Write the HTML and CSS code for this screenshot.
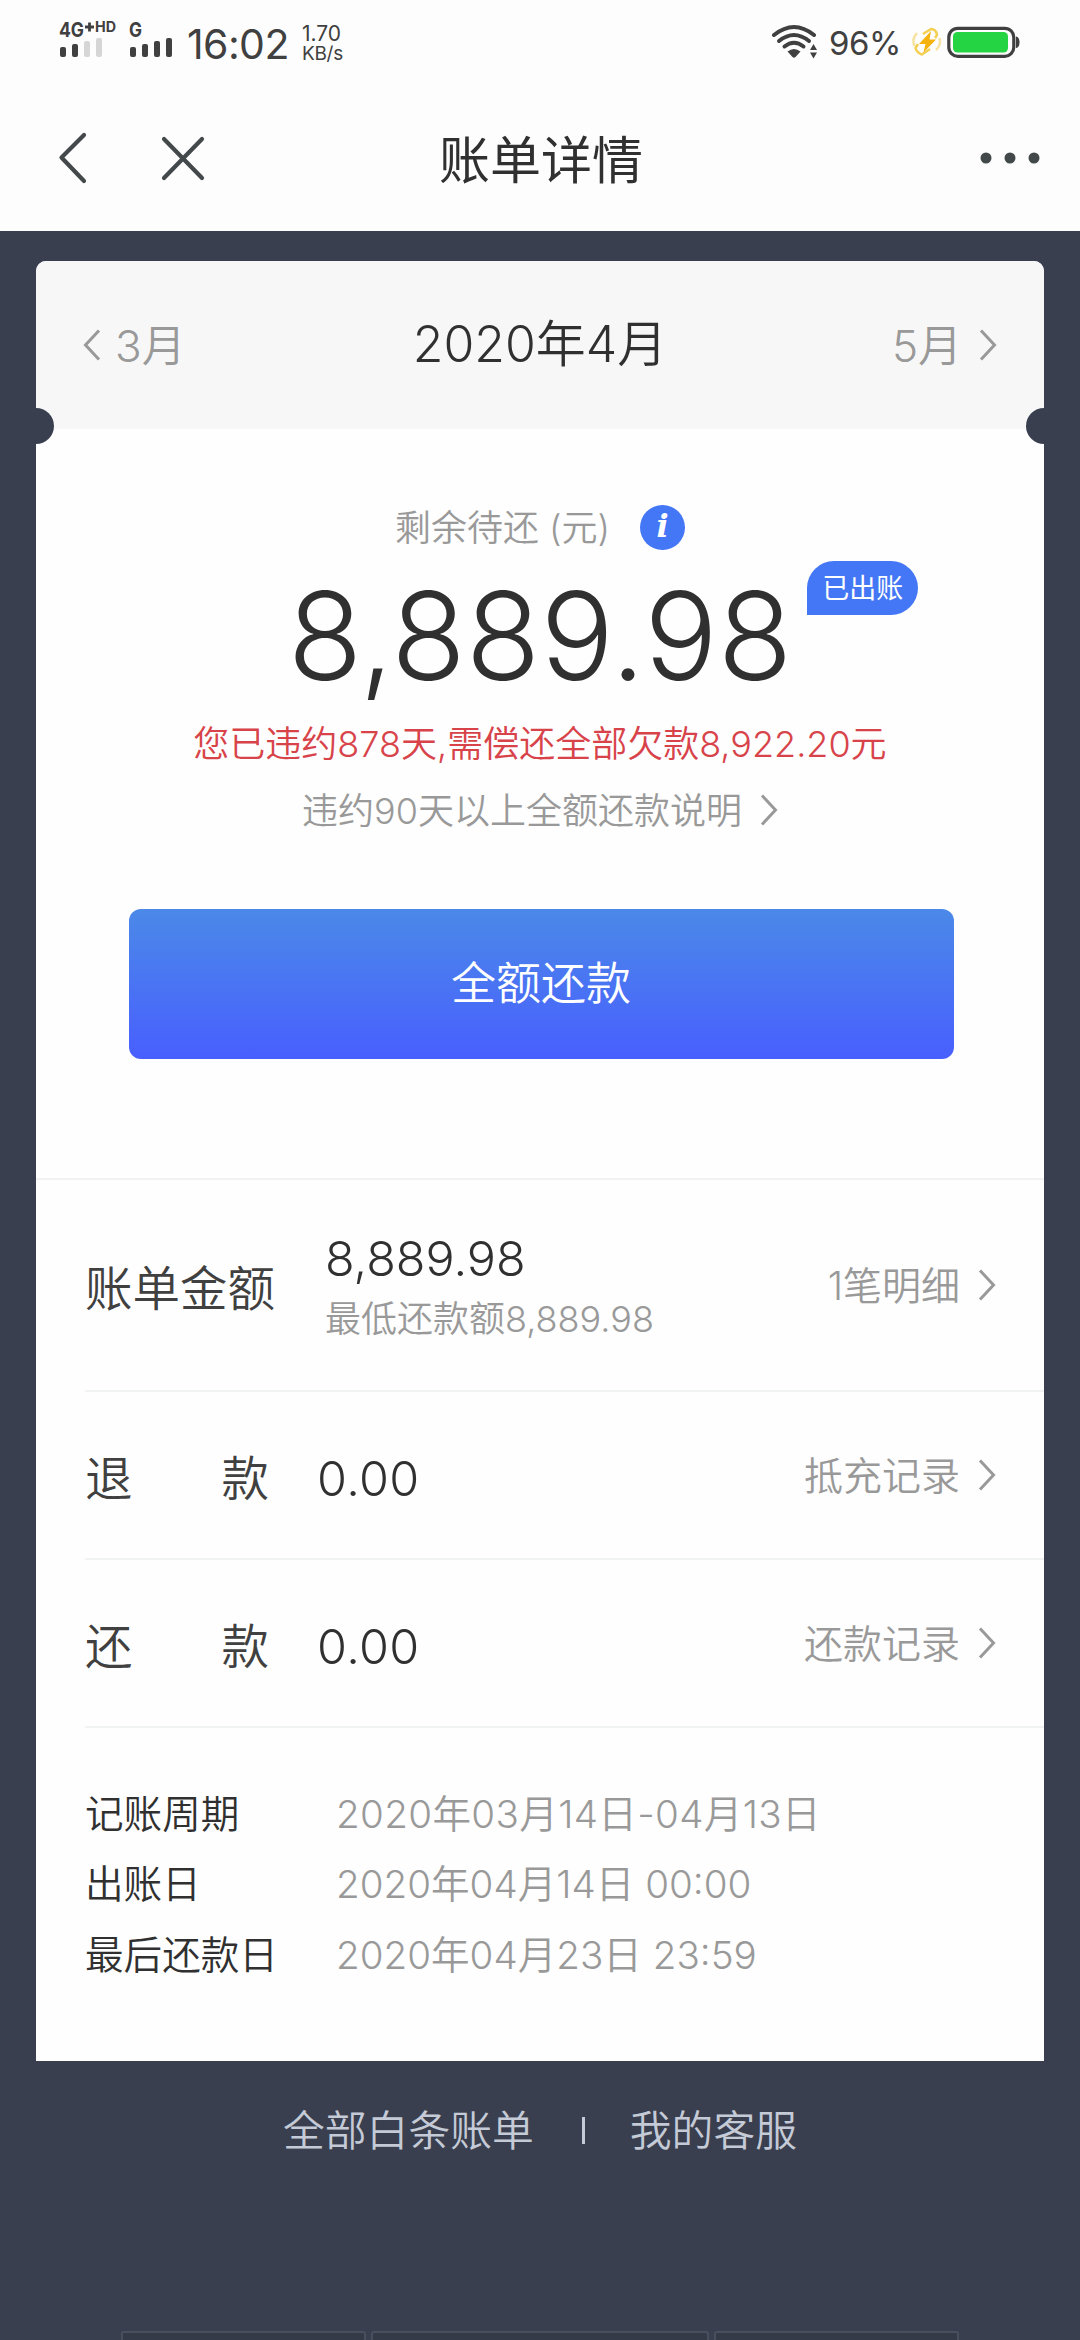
FILE: index.html
```html
<!DOCTYPE html>
<html lang="zh-CN">
<head>
<meta charset="utf-8">
<title>账单详情</title>
<link rel="stylesheet" href="styles.css">
</head>
<body>
<svg class="defs" width="0" height="0">
  <symbol id="chev" viewBox="0 0 18 32"><path d="M2 1.500L15.500 16L2 30.500" fill="none" stroke="currentColor" stroke-width="3"/></symbol>
</svg>
<header class="top">
  <div class="status">
    <svg class="signal" width="136" height="54" viewBox="0 -10 136 54">
      <g class="net"><text x="0" y="17" font-size="20" textLength="25" lengthAdjust="spacingAndGlyphs">4G</text>
      <text x="36" y="12" font-size="14" textLength="21" lengthAdjust="spacingAndGlyphs">HD</text>
      <text x="70" y="17" font-size="20" textLength="13" lengthAdjust="spacingAndGlyphs">G</text></g>
      <path d="M26 7h9M30.500 2.500v9" stroke="#404040" stroke-width="2.800"/>
      <g fill="#404040"><rect x="1" y="27" width="6" height="10" rx="2"/><rect x="13" y="24" width="6" height="13" rx="2"/>
      <rect x="71" y="27" width="6" height="10" rx="2"/><rect x="83" y="24" width="6" height="13" rx="2"/><rect x="95" y="21" width="6" height="16" rx="2"/><rect x="107" y="18" width="6" height="19" rx="2"/></g>
      <g fill="#d6d6d6"><rect x="25" y="21" width="6" height="16" rx="2"/><rect x="37" y="18" width="6" height="19" rx="2"/></g>
    </svg>
    <span class="clock">16:02</span>
    <span class="speed"><span class="rate">1.70</span><span class="unit">KB/s</span></span>
    <span class="grow"></span>
    <svg class="wifi" width="47" height="36" viewBox="0 0 47 36">
      <g fill="none" stroke="#404040" stroke-width="4" stroke-linecap="round"><path d="M3 11Q23 -5 43 11"/><path d="M8 17Q23 5 38 17"/><path d="M13.500 22.500Q23 15 32.500 22.500"/></g>
      <path d="M16.500 27.500Q23 22.500 29.500 27.500L24.500 33Q23 34.500 21.500 33Z" fill="#404040"/>
      <path d="M39 26l3.500-6 3.500 6zM39 28.500h7l-3.500 6z" fill="#404040"/>
    </svg>
    <span class="pct">96%</span>
    <svg class="charge" width="32" height="32" viewBox="0 0 32 32">
      <g fill="none" stroke-width="2.500"><path d="M6 7A12 12 0 0 0 3.500 20M25 24A12 12 0 0 0 28.500 12" stroke="#f7e3a0"/>
      <path d="M12 8L20 3Q25 3 26 9L24 12M19 23L11 28.500Q6 27 4.500 22L7 18" stroke="#f3cf52"/></g>
      <path d="M20 5L8 18H14.500L12.500 26.500L25 13.500H18.500Z" fill="#f5b20c"/>
    </svg>
    <svg class="battery" width="74" height="32" viewBox="0 0 74 32">
      <rect x="1.800" y="2.300" width="65" height="28" rx="9" fill="none" stroke="#404040" stroke-width="3.200"/>
      <rect x="6" y="6" width="55" height="20.500" rx="4.500" fill="#25d442"/>
      <path d="M69 10.500Q72.500 11 72.500 16.300T69 22Z" fill="#404040"/>
    </svg>
  </div>
  <nav class="nav">
    <svg class="back" width="30" height="54" viewBox="0 0 30 54"><path d="M26 4L3.500 26.500L26 50" fill="none" stroke="#43484a" stroke-width="4.200" stroke-linecap="round" stroke-linejoin="round"/></svg>
    <svg class="close" width="46" height="46" viewBox="0 0 46 46"><path d="M4 4L42 43M42 4L4 43" fill="none" stroke="#43484a" stroke-width="4.200" stroke-linecap="round"/></svg>
    <h1 class="title">账单详情</h1>
    <svg class="more" width="62" height="14" viewBox="0 0 62 14" fill="#43484a"><circle cx="7" cy="7" r="5.500"/><circle cx="31" cy="7" r="5.500"/><circle cx="55" cy="7" r="5.500"/></svg>
  </nav>
</header>
<main class="card">
  <section class="months">
    <span class="notch notch-left"></span><span class="notch notch-right"></span>
    <span class="prev"><svg class="chev flip" width="18" height="32"><use href="#chev"/></svg><span class="name">3月</span></span>
    <h2 class="month">2020年4月</h2>
    <span class="next"><span class="name">5月</span><svg class="chev" width="18" height="32"><use href="#chev"/></svg></span>
  </section>
  <section class="summary">
    <div class="due"><span class="name">剩余待还 (元)</span><span class="info">i</span></div>
    <div class="total"><span>8,889.98</span><span class="badge">已出账</span></div>
    <div class="warn">您已违约878天,需偿还全部欠款8,922.20元</div>
    <div class="explain"><span class="name">违约90天以上全额还款说明</span><svg class="chev" width="18" height="32"><use href="#chev"/></svg></div>
    <button class="pay">全额还款</button>
  </section>
  <section class="row row-bill">
    <span class="label">账单金额</span>
    <span class="amounts"><span class="value">8,889.98</span><span class="minimum">最低还款额8,889.98</span></span>
    <span class="link"><span class="name">1笔明细</span><svg class="chev" width="18" height="32"><use href="#chev"/></svg></span>
  </section>
  <section class="row">
    <span class="label spread"><span>退</span><span>款</span></span><span class="value zero">0.00</span>
    <span class="link"><span class="name">抵充记录</span><svg class="chev" width="18" height="32"><use href="#chev"/></svg></span>
  </section>
  <section class="row">
    <span class="label spread"><span>还</span><span>款</span></span><span class="value zero">0.00</span>
    <span class="link"><span class="name">还款记录</span><svg class="chev" width="18" height="32"><use href="#chev"/></svg></span>
  </section>
  <dl class="dates">
    <dt>记账周期</dt><dd class="period">2020年03月14日-04月13日</dd>
    <dt>出账日</dt><dd>2020年04月14日 00:00</dd>
    <dt>最后还款日</dt><dd>2020年04月23日 23:59</dd>
  </dl>
</main>
<footer class="footer">
  <div class="links"><span>全部白条账单</span><i class="bar"></i><span>我的客服</span></div>
  <div class="tabs"><span></span><span></span><span></span></div>
</footer>
</body>
</html>
```
FILE: styles.css
```css
* { box-sizing: border-box; margin: 0; padding: 0; }
body {
  width: 1080px; height: 2340px; overflow: hidden;
  display: flex; flex-direction: column;
  background: #393f4f; color: #303030;
  font-family: Inter, "Noto Sans CJK SC", sans-serif; font-weight: 350;
}
.defs { position: absolute; }
svg { flex: none; display: block; }
.top { height: 231px; flex: none; background: #fdfdfd; }
.status { height: 85px; display: flex; align-items: flex-start; padding: 10px 59px 0 59px; color: #404040; font-weight: 400; }
.net text { font-family: Inter, sans-serif; font-weight: 700; fill: #404040; }
.signal { margin: 0 -8px 0 0; }
.clock { font-size: 41px; line-height: 48px; width: 101px; margin-top: 10px; white-space: nowrap; letter-spacing: -0.6px; }
.speed { display: flex; flex-direction: column; margin-left: 14px; font-size: 21px; padding-top: 13px; }
.rate { line-height: 21px; }
.unit { font-size: 19px; line-height: 19px; letter-spacing: -0.3px; }
.grow { flex: 1; }
.wifi { margin-top: 14px; }
.pct { font-size: 33px; line-height: 46px; margin: 10px 0 0 11px; width: 74px; white-space: nowrap; letter-spacing: -0.5px; }
.charge { margin: 16px 4px 0 8px; }
.battery { margin-top: 16px; }
.nav { height: 146px; display: grid; grid-template-columns: 30px 118px 1fr 62px; align-items: center; padding: 0 39px 0 58px; }
.close { justify-self: end; }
.title { font-size: 51px; font-weight: 400; line-height: 60px; text-align: center; padding: 6px 103px 0 0; }
.card { width: 1008px; height: 1800px; flex: none; margin: 30px 36px 0; background: #fefefe; border-radius: 10px 10px 0 0; }
.months {
  position: relative; height: 168px; padding: 0 47px;
  display: grid; grid-template-columns: 1fr auto 1fr; align-items: center;
  background: #f7f7f7; border-radius: 10px 10px 0 0; color: #999; font-size: 44px;
}
.name { padding-bottom: 4px; }
.notch { position: absolute; top: 147px; width: 18px; height: 36px; background: #393f4f; }
.notch-left { left: 0; border-radius: 0 18px 18px 0; }
.notch-right { right: 0; border-radius: 18px 0 0 18px; }
.prev, .next { display: flex; align-items: center; gap: 17px; }
.prev { gap: 14px; }
.next { justify-content: flex-end; }
.flip { transform: scaleX(-1); }
.month { font-size: 50px; font-weight: 350; color: #303030; padding-bottom: 11px; }
.chev { color: #999; }
.summary { height: 751px; padding-top: 68px; display: flex; flex-direction: column; align-items: center; border-bottom: 2px solid #f1f3f3; }
.due { height: 60px; display: flex; align-items: center; font-size: 36px; color: #999; gap: 30px; }
.info { width: 45px; height: 45px; border-radius: 50%; background: #4477f5; color: #fff; font: italic 700 32px/43px "DejaVu Serif", serif; text-align: center; }
.total { position: relative; height: 150px; display: flex; justify-content: center; font-size: 122px; font-weight: 300; line-height: 158px; white-space: nowrap; }
.badge { position: absolute; left: calc(100% + 15px); top: 4px; width: 111px; height: 54px; border-radius: 27px 27px 27px 0; background: #4477f5; color: #fff; font-size: 27px; line-height: 56px; font-weight: 400; text-align: center; }
.warn { height: 70px; line-height: 74px; font-size: 36px; color: #d8434a; }
.explain { height: 66px; display: flex; align-items: center; gap: 18px; font-size: 36px; color: #999; }
.pay { width: 825px; height: 150px; margin: 66px 0 0 2px; border: 0; border-radius: 12px; background: linear-gradient(#4b89e8, #485ffe); color: #fff; font: 350 45px/150px Inter, "Noto Sans CJK SC", sans-serif; }
.row { height: 168px; margin-left: 49px; padding-right: 48px; display: flex; align-items: center; border-bottom: 2px solid #f1f3f3; }
.row-bill { height: 212px; }
.label { font-size: 47.5px; color: #404040; width: 240px; }
.spread { width: 184px; margin-right: 48px; display: flex; justify-content: space-between; }
.value { font-size: 48.5px; line-height: 60px; padding-top: 7px; }
.zero { letter-spacing: 0.4px; }
.amounts { display: flex; flex-direction: column; padding-top: 1px; }
.minimum { font-size: 36px; line-height: 60px; color: #999; }
.link { margin-left: auto; display: flex; align-items: center; gap: 18px; font-size: 39px; color: #999; }
.dates { display: grid; grid-template-columns: 251px 1fr; grid-template-rows: 71px 69px 73px; padding: 47px 0 0 49px; align-items: center; font-size: 38.6px; }
.dates dt { color: #303030; }
.dates dd { color: #999; }
.dates .period { letter-spacing: 0.35px; }
.footer { height: 279px; display: flex; flex-direction: column; justify-content: space-between; align-items: center; }
.links { display: flex; align-items: center; height: 134px; font-size: 41.8px; color: #c4cad6; }
.bar { width: 3px; height: 27px; background: #c4cad6; margin: 4px 45px 0 48px; }
.tabs { width: 838px; height: 9px; display: flex; justify-content: space-between; }
.tabs span { width: 245px; border: 2px solid #484f5d; border-bottom: 0; border-radius: 3px 3px 0 0; background: #343a48; }
.tabs span:nth-child(2) { width: 338px; }
```
